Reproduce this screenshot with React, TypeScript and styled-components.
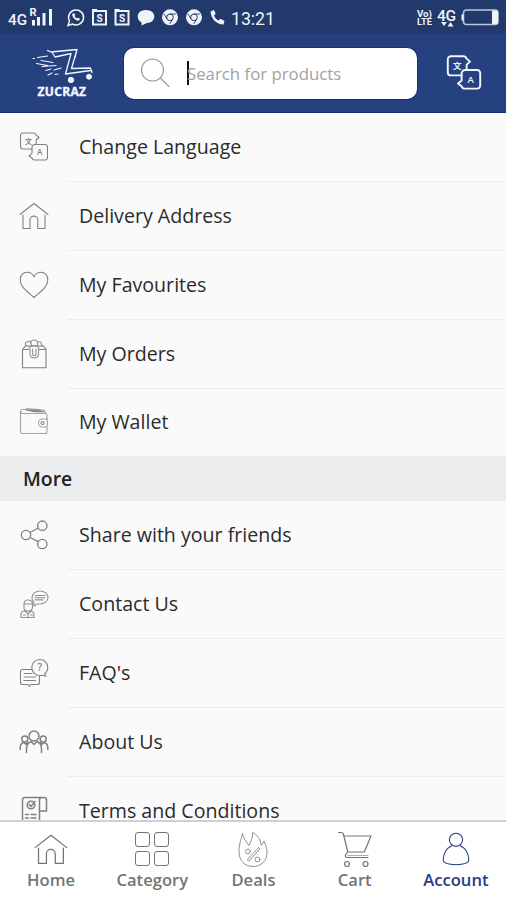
import React from 'react';
import styled, { createGlobalStyle } from 'styled-components';

type IconName =
  | 'language'
  | 'home'
  | 'heart'
  | 'orders'
  | 'wallet'
  | 'share'
  | 'contact'
  | 'faq'
  | 'about'
  | 'terms';

interface MenuItem {
  icon: IconName;
  label: string;
}

const GlobalStyle = createGlobalStyle`
  * {
    box-sizing: border-box;
  }

  body {
    margin: 0;
    background: #fff;
    font-family: 'Open Sans', 'Noto Sans', sans-serif;
  }
`;

const Screen = styled.div`
  display: flex;
  flex-direction: column;
  width: 506px;
  height: 900px;
  overflow: hidden;
  background: #fafafa;
`;

const StatusBar = styled.div`
  display: flex;
  flex: none;
  justify-content: space-between;
  height: 34px;
  padding: 0 6px 0 8px;
  background: #213a6b;
`;

const StatusGroup = styled.div`
  display: flex;
  align-items: center;
`;

const Clock = styled.span`
  margin-left: 4px;
  padding-top: 3px;
  color: #eef1f8;
  font: 17.8px/20px Roboto, sans-serif;
  letter-spacing: -0.1px;
`;

const Header = styled.header`
  display: flex;
  flex: none;
  align-items: center;
  height: 79px;
  padding: 0 22px 0 30px;
  background: #25417f;
  border-bottom: 1px solid #142f74;
`;

const SearchBox = styled.div`
  display: flex;
  align-items: center;
  width: 293px;
  height: 51px;
  margin: 0 29px;
  padding-left: 15px;
  background: #fff;
  border-radius: 10px;
  box-shadow: 0 0 0 1px #173179;
`;

const Caret = styled.span`
  width: 2px;
  height: 24px;
  margin-left: 16px;
  background: #111;
`;

const Placeholder = styled.span`
  margin-left: -2px;
  padding-top: 1px;
  color: #a2a2a2;
  font-size: 16.8px;
  line-height: 24px;
  white-space: nowrap;
`;

const Content = styled.main`
  flex: 1;
  min-height: 0;
  overflow: hidden;
`;

const Row = styled.div<{ $height?: number }>`
  display: flex;
  align-items: center;
  height: ${props => props.$height || 69}px;
  padding-left: 19px;
`;

const RowBody = styled.div<{ $divider: boolean }>`
  display: flex;
  flex: 1;
  align-items: center;
  height: 100%;
  margin-left: 19px;
  padding: 0 0 1px 11px;
  border-bottom: 1px solid ${props => (props.$divider ? '#ececec' : 'transparent')};
`;

const RowLabel = styled.span`
  color: #2b2b2b;
  font-size: 19.6px;
  line-height: 26px;
  white-space: nowrap;
`;

const SectionTitle = styled.h2`
  display: flex;
  align-items: center;
  height: 45px;
  margin: 0;
  padding: 1px 0 0 23px;
  background: #ebedee;
  color: #222;
  font-size: 19.4px;
  font-weight: 600;
  line-height: 26px;
`;

const TabBar = styled.nav`
  display: grid;
  flex: none;
  grid-template-columns: repeat(5, 1fr);
  height: 80px;
  background: #fff;
  border-top: 2px solid #ced0d6;
`;

const Tab = styled.div<{ $active?: boolean }>`
  display: flex;
  flex-direction: column;
  align-items: center;
  padding: 8px 0 0 1px;
  color: ${props => (props.$active ? '#243c84' : '#747474')};
`;

const TabLabel = styled.span`
  font-size: 16.6px;
  font-weight: 600;
  line-height: 24px;
`;

const LineSvg = styled.svg`
  display: block;
  flex: none;
  fill: none;
  stroke: currentColor;
  stroke-width: 1.1;
  stroke-linejoin: round;
  stroke-linecap: round;
`;

const MenuSvg = styled(LineSvg)`
  margin-bottom: 2px;
  color: #808080;
`;

const GlyphText = styled.text`
  fill: currentColor;
  stroke: none;
  font-family: 'Open Sans', 'Noto Sans CJK SC', sans-serif;
  font-weight: 600;
`;

const LanguageShape = () => (
  <>
    <path d="M13 17H4a2.500 2.500 0 0 1-2.500-2.500V3.500A2.500 2.500 0 0 1 4 1h10.500q2 0 2.500 1.800l3 2.700-2.800 2.500v4.500" />
    <path d="M16 12.500h10a2.500 2.500 0 0 1 2.500 2.500v10.500a2.500 2.500 0 0 1-2.500 2.500H15.500q-2 0-2.500-2l-3-2.200 3-2.500V15.500a3 3 0 0 1 3-3z" />
    <GlyphText x="5.900" y="11.700" fontSize="7">文</GlyphText>
    <GlyphText x="18" y="23.200" fontSize="8">A</GlyphText>
  </>
);

const HomeShape = () => (
  <>
    <path d="M1 12.500 15 1.500l14 11" />
    <path d="M4 13v13.500h7V18a3.700 3.700 0 0 1 7.800 0v8.500H26V13" />
  </>
);

const menuShapes: Record<IconName, React.ReactNode> = {
  language: <LanguageShape />,
  home: <g transform="translate(0 1)"><HomeShape /></g>,
  heart: (
    <path d="M15 27.500C10 22.500 1.200 17.500 1.200 10 1.200 5.500 4 2.300 8 2.300c3.200 0 5.700 1.700 7 4.500 1.300-2.800 3.800-4.500 7-4.500 4 0 6.800 3.200 6.800 7.700C28.800 17.500 20 22.500 15 27.500z" />
  ),
  orders: (
    <>
      <path d="M3.500 28.800V10.500L6.300 7h18.200L27 10.500v18.300zM3.500 10.500h6.300m10 0H27" />
      <path d="M11 10v4.800c0 5.500 8.500 5.500 8.500 0V10M13.500 10v4.500c0 2.800 3.500 2.800 3.500 0V10" opacity=".85" />
      <path d="M6.500 7V3.500L11 2l1.500 4M12 4c0-4 6.500-4 6.500 0v3M18.500 2.500l3.500.8 1 3.700M10 9c2-3 8-3 10 0" opacity=".85" />
    </>
  ),
  wallet: (
    <>
      <path d="M28 12V8.500Q28 6.500 26 6.500H3.500a2 2 0 0 1 0-4h3L8 1.500l17 1.500 2 3.500" opacity=".7" />
      <path d="M1.500 4.500V24.500Q1.500 26.500 3.200 26.500H26q2 0 2-2V20M28 12h-4.500a4 4 0 0 0 0 8H28q1-4 0-8z" opacity=".7" />
      <path d="M7 3h10l8 1.800H16z" fill="#999" />
      <circle cx="23.500" cy="16" r="1.500" />
    </>
  ),
  share: (
    <g strokeWidth="1.300">
      <circle cx="7" cy="15" r="4.700" />
      <circle cx="23.300" cy="5.700" r="4.700" />
      <circle cx="23.300" cy="24" r="4.700" />
      <path d="m11.200 12.500 8-4.500m-8 9.500 8 4.200" />
    </g>
  ),
  contact: (
    <g opacity=".85">
      <path d="M15 13.500q-2-1.500-2-4.700C13 4.800 16.500 2 21 2s8 3 8 6.500-3.500 6.500-8 6.500h-3l-3 2zM16 6.500h10M16 8.700h10M16 10.900h8" />
      <path d="M5 19v-4q0-4 4-4 4.500 0 4.500 4v3q0 4-4.300 4Q5 22 5 19zM5 15h7.500M2 28.500v-3q0-3.500 4-3.500h5q4 0 4 3.500v3zM6 22l3 3 3-3M9 25v3M4.500 26h2m5 0h2" />
    </g>
  ),
  faq: (
    <>
      <path d="M12.500 11.500h-9q-2 0-2 2v11q0 2 2 2H9l1.500 2 1.500-2h6.500q2 0 2-2v-6M5 15.500h8M5 19h11.500M5 22.500h11.500" />
      <path d="M25.500 16q3.300-2.500 3.300-7A8 8 0 1 0 20.500 17.500l2-.3 4.500 1z" />
      <GlyphText x="18.500" y="13" fontSize="10">?</GlyphText>
    </>
  ),
  about: (
    <g strokeWidth="1.500">
      <circle cx="15" cy="9" r="5" />
      <circle cx="5.800" cy="12" r="3" />
      <circle cx="24.200" cy="12" r="3" />
      <path d="M7.500 25.500v-4q0-5 4.500-7l3 3 3-3q4.500 2 4.500 7v4M1.200 22.500v-2q0-4 3.600-5l2 1.800 1.700-1.800M28.800 22.500v-2q0-4-3.600-5l-2 1.800-1.700-1.800" />
    </g>
  ),
  terms: (
    <g strokeWidth="1.500">
      <path d="M3.500 30V4Q3.500 1.500 6 1.500h19q2.500 0 2.500 2.500v11H20.500V4q0-2.500 2.500-2.500M20.500 15v15M6.500 18.500h3m2.500 0h5M6.500 22h3m2.500 0h5M6.500 25.500h3m2.500 0h5" />
      <circle cx="12" cy="9" r="3.800" />
      <path d="m10.300 8.500 1.700 2 4-5" />
    </g>
  ),
};

const accountItems: MenuItem[] = [
  { icon: 'language', label: 'Change Language' },
  { icon: 'home', label: 'Delivery Address' },
  { icon: 'heart', label: 'My Favourites' },
  { icon: 'orders', label: 'My Orders' },
  { icon: 'wallet', label: 'My Wallet' },
];

const moreItems: MenuItem[] = [
  { icon: 'share', label: 'Share with your friends' },
  { icon: 'contact', label: 'Contact Us' },
  { icon: 'faq', label: "FAQ's" },
  { icon: 'about', label: 'About Us' },
  { icon: 'terms', label: 'Terms and Conditions' },
];

const tabs = [
  { label: 'Home', icon: <g transform="translate(2 3.500) scale(1.130)"><HomeShape /></g> },
  {
    label: 'Category',
    icon: (
      <>
        {[2.5, 21.5].map(x =>
          [2.5, 21.5].map(y => (
            <rect key={`${x}-${y}`} x={x} y={y} width="14" height="14" rx="2.500" strokeWidth="1" />
          ))
        )}
      </>
    ),
  },
  {
    label: 'Deals',
    icon: (
      <g strokeWidth="1" opacity=".8">
        <path d="M8.500 3.500c-1 6-3.500 9-3.500 18C5 31 11 36.500 19 36.500S33 31 33 22.500c0-4.500-1.500-7.500-3-11.500-.8 2-1.500 3.500-2.800 4.500C26.500 9 23.500 5 18.500 2.500c.5 5-1.300 8-3.500 13C12 11.500 9.500 8.500 8.500 3.500z" />
        <path d="m13.500 29.500 11-12 1.500 1.300L15 31z" />
        <circle cx="14" cy="21.500" r="2.400" />
        <circle cx="23.500" cy="29.500" r="2.400" />
      </g>
    ),
  },
  {
    label: 'Cart',
    icon: (
      <g strokeWidth="1.200">
        <path d="M2.500 2.500h3q1.500 0 2 2l4.300 17.500h16.500L35 6H7.500M11.800 22l-2 2.500q-1.500 3 2 3H32M10 28.500" />
        <path d="M12 25.500h20" opacity=".6" />
        <circle cx="11" cy="34" r="2.500" />
        <circle cx="29.500" cy="34" r="2.500" />
      </g>
    ),
  },
  {
    label: 'Account',
    icon: (
      <>
        <circle cx="19" cy="9.800" r="6.600" />
        <path d="M15 15.500C10 18 6.200 23.500 6.200 30.500q0 3.500 12.800 4.300 12.800-.8 12.800-4.300c0-7-3.800-12.500-8.800-15" />
      </>
    ),
  },
];

const SignalIcons = () => (
  <svg width="219" height="34" viewBox="8 0 219 34" fill="none" stroke="#f1f3fa" strokeWidth="1.500">
    <g fill="#f1f3fa" stroke="none" fontFamily="Roboto, sans-serif">
      <text x="8" y="24.700" fontSize="14.500" fontWeight="500" textLength="19" lengthAdjust="spacingAndGlyphs">4G</text>
      <text x="29.500" y="15.500" fontSize="11" fontWeight="700">R</text>
      <path d="M32 20h3v5.500h-3zM37 17h3v8.500h-3zM42.500 13h3v12.500h-3zM49 9h3v16.500h-3z" />
    </g>
    <path d="m68 25.500 1.500-4.500a7.500 7.500 0 1 1 3 3z" />
    <path d="M72.500 13.500c-1.500 3 3.500 8 6.500 7l1-1.500-2-1.500-1 1q-1.500-.7-2.500-2.500l.8-1-1-1.800z" fill="#f1f3fa" stroke="none" />
    {[93, 115.5].map(x => (
      <g key={x}>
        <path d={`M${x} 11h13v13.500h-13zM${x - 1} 10h5`} strokeWidth="2" />
        <text x={x + 3.4} y="21.500" fill="#f1f3fa" stroke="none" fontSize="10" fontWeight="700" fontFamily="Roboto, sans-serif">S</text>
      </g>
    ))}
    <path d="M146 10c5 0 8.300 2.800 8.300 6.500s-3.300 6.500-7.300 6.500l-5.500 2.500V22.500c-2-1-3.800-3-3.800-6 0-3.700 3.300-6.500 8.300-6.500z" fill="#f1f3fa" stroke="none" />
    {[170, 194].map(x => (
      <g key={x}>
        <circle cx={x} cy="17.300" r="8" fill="#f1f3fa" stroke="none" />
        <circle cx={x} cy="17.300" r="3.300" stroke="#213a6b" strokeWidth="1" />
        <path d={`M${x} 14h6M${x - 3} 19l-3-5M${x + 2.7} 19l-3 5`} stroke="#213a6b" strokeWidth=".9" />
      </g>
    ))}
    <path d="M210.500 11.500c.5 7 6 13 13 13l1-3.500-4-2.200-2.200 1.800c-2-1-3.500-3-4.300-5l1.700-1.800-1.700-3.800z" fill="#f1f3fa" stroke="none" />
  </svg>
);

const BatteryIcons = () => (
  <svg width="84" height="34" viewBox="416 0 84 34" fill="#f1f3fa">
    <g fontFamily="Roboto, sans-serif" fontWeight="700">
      <text x="417" y="16.700" fontSize="8.500" textLength="15" lengthAdjust="spacingAndGlyphs">Vo)</text>
      <text x="417" y="24.700" fontSize="8.500" textLength="15" lengthAdjust="spacingAndGlyphs">LTE</text>
      <text x="437" y="20.500" fontSize="15.500" fontWeight="500" textLength="19">4G</text>
    </g>
    <path d="M441 22h6l-3 4zM447.500 26.500h6l-3-4.500z" />
    <rect x="463.500" y="10" width="34.500" height="14.500" rx="3" fill="none" stroke="#bdc8dc" strokeWidth="1.500" />
    <path d="M461.500 14.500h2v6h-2zM492 10.500h4.500q1.500 0 1.500 1.500v10.500q0 1.500-1.500 1.500H492z" />
  </svg>
);

const Logo = () => (
  <svg width="65" height="52" viewBox="30 47 65 52" fill="none" stroke="#f4f6fd" strokeLinecap="round" strokeLinejoin="round">
    <path d="M47.500 50.500 51 52l26-2.500-5.500 19L90.500 68l1.500 4.500M52 52l3 5 16-3.500-5.500 20.500 25-3.500M77 49.500l-2 8" strokeWidth="1.300" />
    <path d="M33 58.500h1.500m3-1 10-1.500M41 60.500l12 2M36.500 63.500l11 2M42 66.500l14-1M46 70.500l5-1.500m3 1 7-2M48 75l4-2m3 1.500 3-.5" strokeWidth="1.200" />
    <circle cx="71" cy="80" r="2.700" fill="#f4f6fd" />
    <circle cx="89" cy="76.700" r="2.500" fill="#f4f6fd" />
    <text x="37.500" y="95.500" fill="#f4f6fd" stroke="#f4f6fd" strokeWidth=".4" fontFamily="Open Sans, sans-serif" fontSize="12" fontWeight="700" textLength="48.500">
      ZUCRAZ
    </text>
  </svg>
);

const MenuRow: React.FC<{ item: MenuItem; last?: boolean; height?: number }> = ({ item, last, height }) => (
  <Row $height={height}>
    <MenuSvg width="30" height="30" viewBox="0 0 30 30">
      {menuShapes[item.icon]}
    </MenuSvg>
    <RowBody $divider={!last}>
      <RowLabel>{item.label}</RowLabel>
    </RowBody>
  </Row>
);

export default function App() {
  return (
    <Screen>
      <GlobalStyle />
      <StatusBar>
        <StatusGroup>
          <SignalIcons />
          <Clock>13:21</Clock>
        </StatusGroup>
        <StatusGroup>
          <BatteryIcons />
        </StatusGroup>
      </StatusBar>

      <Header>
        <Logo />
        <SearchBox>
          <LineSvg width="32" height="32" viewBox="0 0 32 32" color="#999">
            <circle cx="13.500" cy="13" r="11" />
            <path d="m21.500 21 8.500 8.500" />
          </LineSvg>
          <Caret />
          <Placeholder>Search for products</Placeholder>
        </SearchBox>
        <LineSvg width="36" height="36" viewBox="0 0 30 30" color="#f4f6fd">
          <g strokeWidth="1.600">
            <LanguageShape />
          </g>
        </LineSvg>
      </Header>

      <Content>
        {accountItems.map((item, index) => (
          <MenuRow
            key={item.label}
            item={item}
            last={index === accountItems.length - 1}
            height={index === accountItems.length - 1 ? 67 : 69}
          />
        ))}
        <SectionTitle>More</SectionTitle>
        {moreItems.map((item, index) => (
          <MenuRow key={item.label} item={item} last={index === moreItems.length - 1} />
        ))}
      </Content>

      <TabBar>
        {tabs.map(tab => (
          <Tab key={tab.label} $active={tab.label === 'Account'}>
            <LineSvg width="38" height="38" viewBox="0 0 38 38">
              {tab.icon}
            </LineSvg>
            <TabLabel>{tab.label}</TabLabel>
          </Tab>
        ))}
      </TabBar>
    </Screen>
  );
}
